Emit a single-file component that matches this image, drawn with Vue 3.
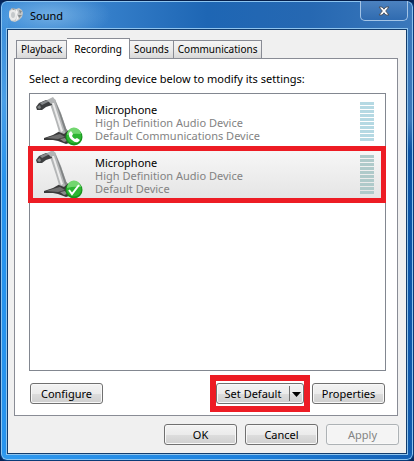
<script setup>
import { ref } from 'vue'

const tabs = ['Playback', 'Recording', 'Sounds', 'Communications']
const activeTab = ref('Recording')

const devices = [
  { id: 1, name: 'Microphone', driver: 'High Definition Audio Device', status: 'Default Communications Device', badge: 'phone' },
  { id: 2, name: 'Microphone', driver: 'High Definition Audio Device', status: 'Default Device', badge: 'check' }
]
const selectedId = ref(2)
</script>

<template>
  <div class="window">
    <header class="title-bar">
      <svg class="title-icon" viewBox="0 0 16 16" aria-hidden="true">
        <path d="M1 4l3-3 4 1 3-1 3 2 1 3-1 4-3 3-4 2-4-1-2-4z" fill="#c4c7c8" />
        <ellipse cx="5" cy="8" rx="4" ry="5.5" fill="#e9eaea" />
        <ellipse cx="5" cy="8" rx="2" ry="3" fill="#c5c9cb" />
        <path d="M8 2l2 3-1 3 2 3-3 3 1-5-1-3z" fill="#f4f4f4" />
        <path d="M11 3l3 1-2 3zM10 8l4 0-3 3zM4 1l3 1-2 1z" fill="#858b8e" />
      </svg>
      <h1 class="title">Sound</h1>
      <button type="button" class="close-button" aria-label="Close">
        <svg viewBox="0 0 12 10" aria-hidden="true">
          <path d="M1 1h3.2L6 3.2 7.8 1H11L7.7 5 11 9H7.8L6 6.8 4.2 9H1l3.3-4z" fill="#fff" stroke="#4b5361" stroke-width="1" />
        </svg>
      </button>
    </header>

    <main class="client">
      <div class="tabs" role="tablist">
        <button
          v-for="tab in tabs"
          :key="tab"
          type="button"
          role="tab"
          class="tab"
          :class="{ active: tab === activeTab }"
          :aria-selected="tab === activeTab"
          @click="activeTab = tab"
        >
          {{ tab }}
        </button>
      </div>

      <section class="panel">
        <p class="hint">Select a recording device below to modify its settings:</p>

        <ul class="devices">
          <li
            v-for="device in devices"
            :key="device.id"
            class="device"
            :class="{ selected: device.id === selectedId }"
            @click="selectedId = device.id"
          >
            <svg class="device-icon" viewBox="0 0 50 50" aria-hidden="true">
              <!-- base -->
              <path d="M9 41l9-3 7-4 6-2 5 5 1 8-6 2-8-3-5-1-9 0z" fill="#3a3a3a" />
              <path d="M11 41l10-3 4-1 5 3-7 2z" fill="#6f6f6f" />
              <path d="M25 42l5-1 2 3-3 1z" fill="#8a8a8a" />
              <!-- arm -->
              <path d="M14 4l6-2 6 14 6 18-3 3-5-2-3-10z" fill="#b4b6b7" />
              <path d="M17 6l2 0 9 28-2 1z" fill="#ececec" />
              <path d="M20 3l6 14 6 17-2 1-5-16z" fill="#808384" />
              <!-- head -->
              <path d="M1 10l3-4 7-3 5 1 1 4-6 2-4 3-5 0z" fill="#3d3f40" />
              <path d="M5 6l7-3 3 1-8 4z" fill="#85888a" />
              <path d="M12 3l6-3 3 4-5 3z" fill="#b3b5b6" />
              <path d="M2 10l3-2 1 3-2 1z" fill="#808384" />
              <!-- status badge -->
              <circle cx="39" cy="40" r="8.5" fill="#16921c" />
              <circle cx="39" cy="39" r="7.5" fill="#2db532" />
              <path d="M32 38a7 7 0 0 1 14-1q-7-1-14 1z" fill="#72d66f" />
              <path
                v-if="device.badge === 'phone'"
                d="M34 36l2-2 2 3-1 2q1 2 3 3l2-1 3 2-2 2q-3 1-6-2-4-3-3-7z"
                fill="#fff"
              />
              <path v-else d="M34 40l3 4 7-9" fill="none" stroke="#fff" stroke-width="2" />
            </svg>
            <div class="device-text">
              <strong>{{ device.name }}</strong>
              <span>{{ device.driver }}</span>
              <span>{{ device.status }}</span>
            </div>
            <div class="meter">
              <i v-for="n in 10" :key="n"></i>
            </div>
          </li>
        </ul>

        <div class="actions">
          <button type="button" class="button">Configure</button>
          <div class="split">
            <button type="button" class="split-main">Set Default</button>
            <button type="button" class="split-arrow" aria-label="More default options">
              <svg viewBox="0 0 9 5" aria-hidden="true"><path d="M0 0h9L4.5 5z" fill="#000" /></svg>
            </button>
          </div>
          <button type="button" class="button">Properties</button>
        </div>
      </section>

      <footer class="footer">
        <button type="button" class="button">OK</button>
        <button type="button" class="button">Cancel</button>
        <button type="button" class="button" disabled>Apply</button>
      </footer>
    </main>
  </div>
</template>

<style>
body {
  background: #06265a;
}
</style>

<style scoped>
.window {
  box-sizing: border-box;
  min-height: 100vh;
  display: flex;
  flex-direction: column;
  padding: 0 5px 6px;
  border: 1px solid #0a3b78;
  border-top-color: #061f4a;
  border-radius: 7px;
  box-shadow: inset 0 0 0 1px #8cc4f0;
  background:
    radial-gradient(ellipse 60px 24px at 50px 14px, rgba(150, 200, 240, 0.6), transparent),
    linear-gradient(90deg, #2f9af0 0, #1c80dc 60%, #1560b4 100%) 0 100% / 100% 7px no-repeat,
    linear-gradient(180deg, transparent 0, #3b78bb 120px, #0a52a4 150px, #125cae 100%) 100% 0 / 7px 100% no-repeat,
    linear-gradient(180deg, transparent 0, #4a9fe8 100px, #2894ee 180px) 0 0 / 7px 100% no-repeat,
    linear-gradient(90deg, #3a8cd8 0, #357fca 25%, #1e66b4 50%, #2668b2 75%, #3b78bb 100%);
  font-family: "Noto Sans", "Open Sans", sans-serif;
  font-size: 11px;
  color: #000;
}
button {
  margin: 0;
  padding: 0;
  font: inherit;
  color: inherit;
}

/* title bar */
.title-bar {
  display: flex;
  align-items: center;
  height: 28px;
  padding-left: 2px;
}
.title-icon {
  width: 16px;
  height: 16px;
}
.title {
  flex: 1;
  margin: 0 0 0 6px;
  font-size: 11px;
  font-weight: 400;
}
.close-button {
  align-self: flex-start;
  display: flex;
  align-items: center;
  justify-content: center;
  width: 48px;
  height: 20px;
  border: 1px solid #a3c4e6;
  border-top: 0;
  border-radius: 0 0 5px 5px;
  background: linear-gradient(#4c82c0, #2f6bb0);
}
.close-button svg {
  width: 12px;
  height: 10px;
}

/* client area */
.client {
  flex: 1;
  display: flex;
  flex-direction: column;
  padding: 8px 7px 8px 6px;
  border: 1px solid #123c6c;
  outline: 1px solid #8fc4ee;
  margin: 0 1px;
  background: #f0f0f0;
}
.tabs {
  position: relative;
  display: flex;
  align-items: flex-end;
  margin: 0 2px -1px;
  font-size: 10px;
}
.tab {
  height: 19px;
  padding: 0 4px;
  border: 1px solid #898c95;
  border-left-width: 0;
  background: linear-gradient(#f4f4f4 0, #ececec 50%, #d8d8d8 100%);
  line-height: 17px;
}
.tab:first-child {
  border-left-width: 1px;
}
.tab.active {
  height: 21px;
  padding: 0 7px;
  border-bottom: 0;
  background: #fff;
}
.panel {
  flex: 1;
  display: flex;
  flex-direction: column;
  margin-right: 1px;
  padding: 12px 11px 11px 14px;
  border: 1px solid #898c95;
  background: #fff;
}
.hint {
  margin: 0 0 7px;
  line-height: 15px;
}

/* device list */
.devices {
  flex: 1;
  margin: 0;
  padding: 0;
  border: 1px solid #828790;
  list-style: none;
}
.device {
  position: relative;
  display: flex;
  align-items: flex-start;
  height: 53px;
}
.device.selected {
  background: linear-gradient(#f8f8f8, #e4e4e4);
}
.device.selected::after {
  content: '';
  position: absolute;
  inset: -1px -1px -3px -2px;
  border: 5px solid #ed1c24;
}
.device-icon {
  width: 50px;
  height: 50px;
  margin: 3px 0 0 5px;
}
.device-text {
  flex: 1;
  display: flex;
  flex-direction: column;
  margin: 9px 0 0 10px;
  line-height: 13px;
  color: #838383;
}
.device-text strong {
  font-weight: 400;
  color: #000;
}
.meter {
  display: grid;
  gap: 1px;
  margin: 8px 11px 0 0;
}
.meter i {
  width: 14px;
  height: 3px;
  background: #b5d9e3;
}
.selected .meter i {
  background: #afcaca;
}

/* buttons */
.button,
.split {
  box-sizing: border-box;
  height: 21px;
  border: 1px solid #707070;
  border-radius: 3px;
  background: linear-gradient(#f3f3f3 0, #ebebeb 50%, #dddddd 51%, #cfcfcf 100%);
  box-shadow: inset 0 0 0 1px #f8f8f8;
}
.button {
  width: 73px;
  line-height: 19px;
}
.button:disabled {
  border-color: #adb2b5;
  background: #f4f4f4;
  color: #838383;
}
.actions {
  display: flex;
  gap: 8px;
  padding: 12px 1px 0;
}
.split {
  position: relative;
  display: flex;
  width: 88px;
  margin-left: auto;
}
.split::after {
  content: '';
  position: absolute;
  inset: -9px -7px;
  border: 6px solid #ed1c24;
  pointer-events: none;
}
.split button {
  border: 0;
  background: none;
  line-height: 19px;
}
.split-main {
  flex: 1;
}
.split .split-arrow {
  width: 14px;
  margin: 2px 0;
  border-left: 1px solid #707070;
  line-height: 10px;
}
.split-arrow svg {
  width: 9px;
  height: 5px;
  vertical-align: middle;
}
.footer {
  display: flex;
  justify-content: flex-end;
  gap: 8px;
  padding-top: 8px;
}
</style>
